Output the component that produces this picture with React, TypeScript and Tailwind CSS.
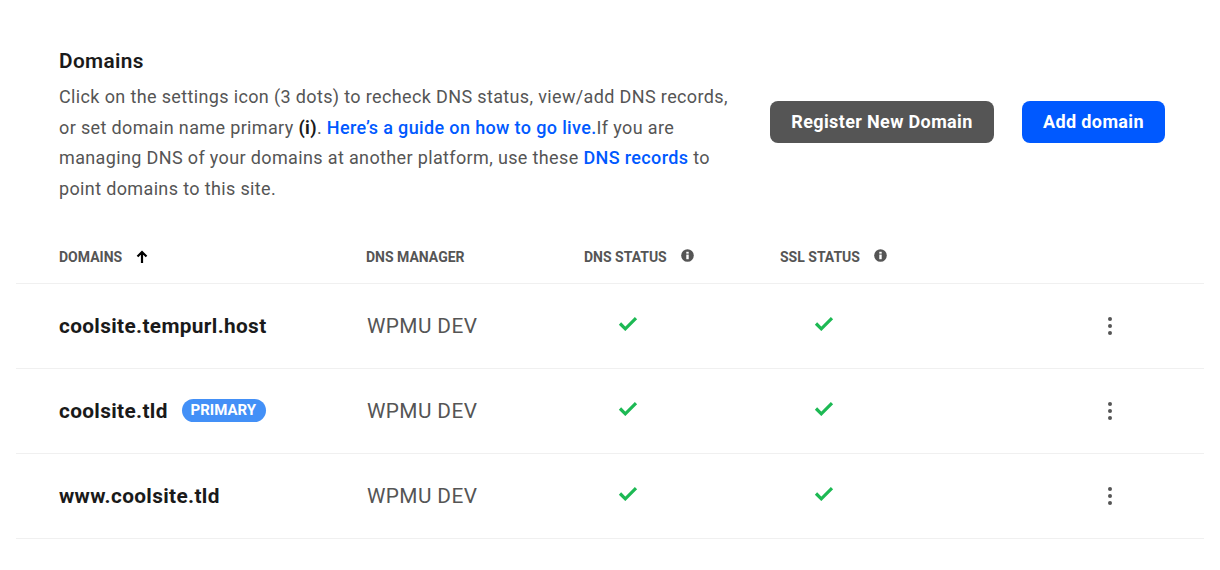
const rows = [
  { name: 'coolsite.tempurl.host', primary: false },
  { name: 'coolsite.tld', primary: true },
  { name: 'www.coolsite.tld', primary: false },
]

function InfoIcon() {
  return (
    <svg viewBox="0 0 14 14" className="w-[13px] h-[13px] ml-[14px] -mt-[3px]">
      <circle cx="7" cy="7" r="6.8" fill="#555555" />
      <rect x="5.7" y="6" width="2.6" height="5" fill="#ffffff" />
      <rect x="5.7" y="3" width="2.6" height="2" fill="#ffffff" />
    </svg>
  )
}

function StatusCheck() {
  return (
    <svg viewBox="0 0 20 15" className="w-[20px] h-[15px] -mt-[5px]">
      <path d="M2 7.5 L7.3 12.8 L18 2.2" fill="none" stroke="#1db954" strokeWidth="3.2" />
    </svg>
  )
}

function Dots() {
  return (
    <div className="flex flex-col gap-[3px] w-[4px]">
      <span className="w-[4px] h-[4px] rounded-full bg-[#555555]" />
      <span className="w-[4px] h-[4px] rounded-full bg-[#555555]" />
      <span className="w-[4px] h-[4px] rounded-full bg-[#555555]" />
    </div>
  )
}

export default function App() {
  return (
    <div className="w-[1220px] h-[570px] bg-white overflow-hidden px-4 font-['Roboto',sans-serif]">
      {/* intro */}
      <div className="flex items-center pl-[43px] pt-[46px]">
        <div className="w-[711px] shrink-0">
          <h2 className="text-[20.8px] leading-[30px] font-semibold tracking-[0.35px] text-[#1a1a1a]">Domains</h2>
          <p className="w-[680px] text-[18px] leading-[30.6px] tracking-[0.36px] text-[#555555] mt-[6px]">
            Click on the settings icon (3 dots) to recheck DNS status, view/add DNS records, or set domain name primary{' '}
            <b className="font-bold text-[#1a1a1a]">(i)</b>.{' '}
            <a className="font-medium text-[#0059ff]">Here’s a guide on how to go live.</a>If you are managing DNS of your domains at another platform, use these{' '}
            <a className="font-medium text-[#0059ff]">DNS records</a> to point domains to this site.
          </p>
        </div>
        <div className="flex gap-[28px] -mt-[6px]">
          <button className="h-[42px] w-[224px] pb-[1px] rounded-lg bg-[#555555] text-white text-[18px] font-bold tracking-[0.36px]">Register New Domain</button>
          <button className="h-[42px] w-[143px] pb-[1px] rounded-lg bg-[#0059ff] text-white text-[18px] font-bold tracking-[0.36px]">Add domain</button>
        </div>
      </div>

      {/* table head */}
      <div className="grid grid-cols-[307px_218px_196px_1fr] items-center h-[79px] pt-[26px] pl-[43px] mt-[1px] border-b border-[#f0f0f0] text-[14px] font-bold text-[#555555] uppercase">
        <div className="flex items-center">
          Domains
          <svg viewBox="0 0 12 14" className="w-[12px] h-[14px] ml-[14px]">
            <path d="M6 13 V2 M1.5 6.5 L6 2 L10.5 6.5" fill="none" stroke="#000000" strokeWidth="2.2" />
          </svg>
        </div>
        <div>DNS Manager</div>
        <div className="flex items-center">DNS Status<InfoIcon /></div>
        <div className="flex items-center">SSL Status<InfoIcon /></div>
      </div>

      {rows.map((r) => (
        <div key={r.name} className="grid grid-cols-[307px_218px_196px_1fr] items-center h-[85px] pl-[43px] border-b border-[#f0f0f0]">
          <div className="flex items-center">
            <span className="text-[20.8px] font-bold tracking-[0.35px] text-[#1a1a1a]">{r.name}</span>
            {r.primary && (
              <span className="ml-[14px] mb-[2px] h-[23px] w-[84px] pr-[1px] text-center rounded-full bg-[#4390f7] text-white text-[15px] font-bold leading-[23px]">PRIMARY</span>
            )}
          </div>
          <div className="pl-[1px] text-[20.8px] tracking-[0.4px] text-[#555555]">WPMU DEV</div>
          <div className="flex pl-[34px]"><StatusCheck /></div>
          <div className="flex items-center justify-between pl-[34px] pr-[92px]">
            <StatusCheck />
            <Dots />
          </div>
        </div>
      ))}
    </div>
  )
}
